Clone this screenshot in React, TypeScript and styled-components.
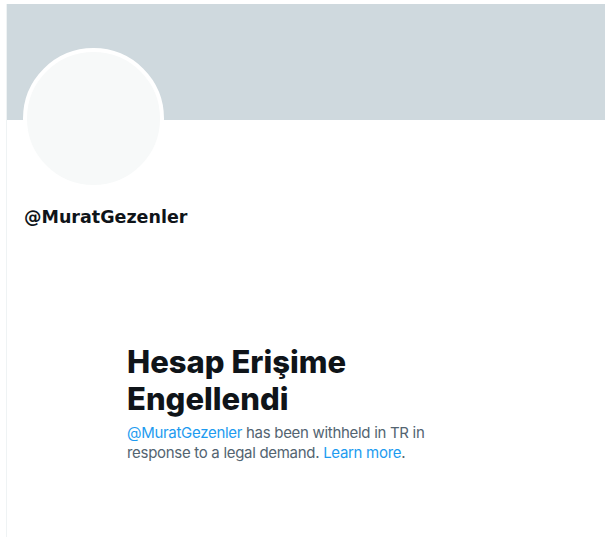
import React from "react";
import styled, { createGlobalStyle } from "styled-components";

const Global = createGlobalStyle`
  html, body { margin: 0; padding: 0; background: #ffffff; }
  body { font-family: Inter, "Noto Sans", sans-serif; color: #0f1419; }
`;

const Page = styled.div`
  padding: 4px 0 0 6px;
`;

const Column = styled.main`
  width: 598px;
  min-height: 533px;
  border-left: 1px solid #eff3f4;
  display: flex;
  flex-direction: column;
`;

const Banner = styled.div`
  height: 116px;
  background: #cfd9de;
`;

const Profile = styled.section`
  padding: 0 16px;
  display: flex;
  flex-direction: column;
`;

const Avatar = styled.div`
  width: 133px;
  height: 133px;
  margin-top: -72px;
  border: 4px solid #ffffff;
  border-radius: 50%;
  background: #f7f9f9;
`;

const Handle = styled.h2`
  margin: 17px 0 0 1px;
  font-family: "DejaVu Sans", sans-serif;
  font-size: 17.5px;
  font-weight: 700;
  line-height: 22px;
  color: #0f1419;
`;

const EmptyState = styled.section`
  padding: 115px 0 0 120px;
  max-width: 336px;
`;

const Title = styled.h1`
  margin: 0;
  font-family: Inter, sans-serif;
  font-size: 31px;
  font-weight: 800;
  line-height: 37px;
  color: #0f1419;
`;

const Message = styled.p`
  margin: 6px 0 0;
  font-family: Inter, sans-serif;
  font-size: 15px;
  letter-spacing: -0.3px;
  line-height: 20px;
  color: #536471;
`;

const Link = styled.a`
  color: #1d9bf0;
  text-decoration: none;
`;

export default function App() {
  return (
    <>
      <Global />
      <Page>
        <Column>
          <Banner />
          <Profile>
            <Avatar />
            <Handle>@MuratGezenler</Handle>
          </Profile>
          <EmptyState>
            <Title>Hesap Erişime Engellendi</Title>
            <Message>
              <Link href="#">@MuratGezenler</Link> has been withheld in TR in
              response to a legal demand. <Link href="#">Learn more</Link>.
            </Message>
          </EmptyState>
        </Column>
      </Page>
    </>
  );
}
